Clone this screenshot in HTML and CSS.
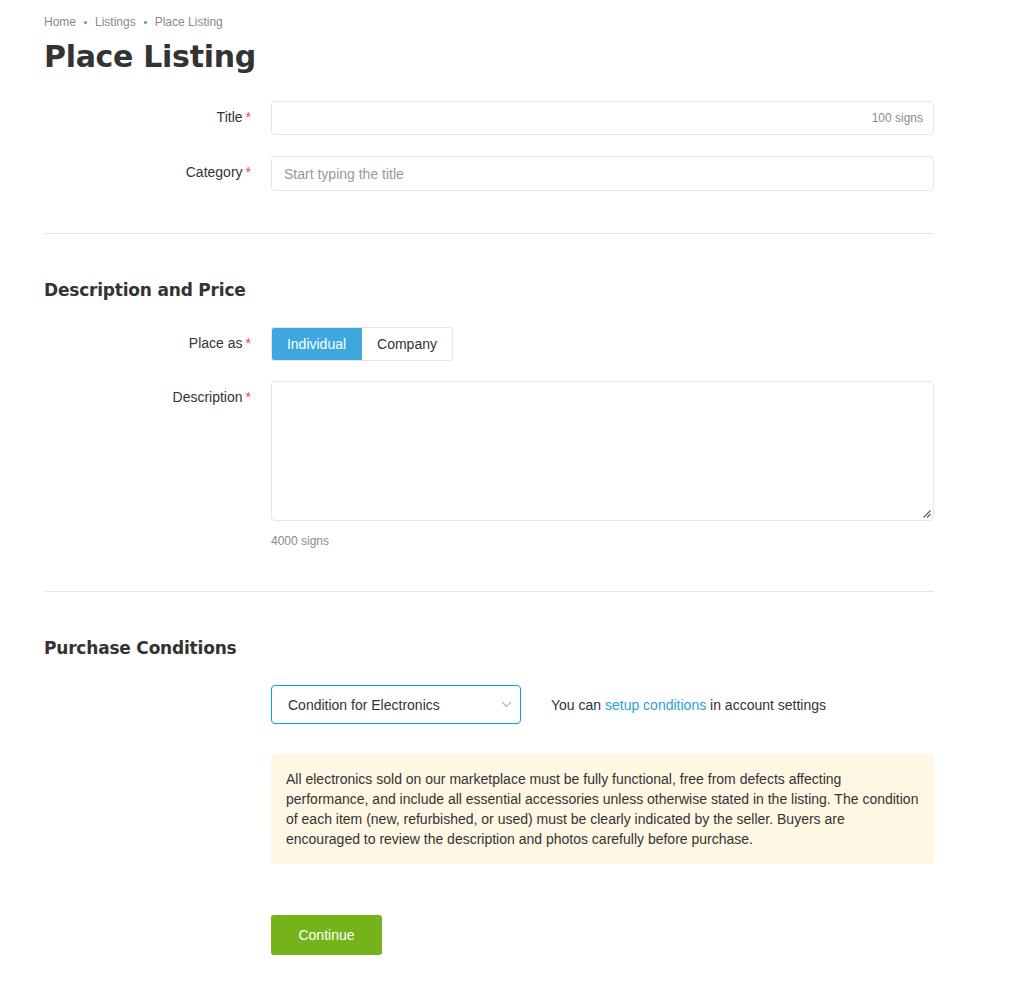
FILE: index.html
```html
<!DOCTYPE html>
<html>
<head>
<meta charset="utf-8">
<link rel="stylesheet" href="styles.css">
</head>
<body>
<div class="page">
  <nav class="crumbs">
    <a>Home</a><span class="dot"></span><a>Listings</a><span class="dot"></span><span>Place Listing</span>
  </nav>
  <h1 class="title">Place Listing</h1>

  <section class="block block-first">
    <div class="row">
      <label class="lbl">Title<span class="req">*</span></label>
      <div class="field">
        <div class="input input-title with-count"><span class="count">100 signs</span></div>
      </div>
    </div>
    <div class="row">
      <label class="lbl">Category<span class="req">*</span></label>
      <div class="field">
        <div class="input"><span class="ph">Start typing the title</span></div>
      </div>
    </div>
  </section>

  <section class="block block-mid">
    <h2 class="sub">Description and Price</h2>
    <div class="row">
      <label class="lbl">Place as<span class="req">*</span></label>
      <div class="field">
        <div class="toggle">
          <span class="opt opt-on">Individual</span><span class="opt">Company</span>
        </div>
      </div>
    </div>
    <div class="row">
      <label class="lbl">Description<span class="req">*</span></label>
      <div class="field">
        <div class="textarea">
          <svg class="grip" width="9" height="9" viewBox="0 0 9 9"><path d="M8.5 1.5 L1.5 8.5 M8.5 5 L5 8.5" stroke="#555" stroke-width="1.1" fill="none"/></svg>
        </div>
        <div class="hint">4000 signs</div>
      </div>
    </div>
  </section>

  <section class="block block-last">
    <h2 class="sub">Purchase Conditions</h2>
    <div class="row">
      <div class="lbl"></div>
      <div class="field">
        <div class="cond-line">
          <div class="select">
            <span>Condition for Electronics</span>
            <svg width="11" height="7" viewBox="0 0 11 7"><path d="M1 1 L5.5 5.5 L10 1" stroke="#b5b5b5" stroke-width="1.2" fill="none"/></svg>
          </div>
          <p class="cond-note">You can <a class="link">setup conditions</a> in account settings</p>
        </div>
        <div class="notice">All electronics sold on our marketplace must be fully functional, free from defects affecting performance, and include all essential accessories unless otherwise stated in the listing. The condition of each item (new, refurbished, or used) must be clearly indicated by the seller. Buyers are encouraged to review the description and photos carefully before purchase.</div>
        <button class="btn">Continue</button>
      </div>
    </div>
  </section>
</div>
</body>
</html>
```

FILE: styles.css
```css
* { box-sizing: border-box; }
html, body { margin: 0; padding: 0; background: #fff; }
body {
  font-family: "Liberation Sans", Arial, sans-serif;
  font-size: 14px;
  color: #333;
}
.page {
  width: 890px;
  margin-left: 44px;
  padding-top: 15px;
}
.crumbs {
  font-size: 12px;
  color: #8a8a8a;
  display: flex;
  align-items: center;
  height: 14px;
}
.crumbs .dot {
  width: 3px;
  height: 3px;
  border-radius: 50%;
  background: #3aa3dc;
  margin: 0 8px;
}
.title {
  font-family: "DejaVu Sans", sans-serif;
  font-weight: bold;
  font-size: 30px;
  letter-spacing: -0.3px;
  color: #333;
  margin: 8px 0 0;
  line-height: 40px;
}
.block {
  border-top: 1px solid #e6e6e6;
  padding: 0 0 44px;
}
.block-first {
  border-top: none;
  padding-top: 24px;
  padding-bottom: 42px;
}
.block-mid { padding-bottom: 43px; }
.block-last { padding-bottom: 40px; }
.sub {
  font-family: "DejaVu Sans", sans-serif;
  font-weight: bold;
  font-size: 17px;
  letter-spacing: -0.2px;
  color: #333;
  margin: 44px 0 25px;
  line-height: 24px;
}
.row {
  display: flex;
  gap: 20px;
  margin-bottom: 21px;
}
.block-mid .row { margin-bottom: 20px; }
.block .row:last-child { margin-bottom: 0; }
.lbl {
  width: 207px;
  flex: none;
  text-align: right;
  padding-top: 8px;
  line-height: 16px;
  color: #333;
}
.req { color: #e8484a; margin-left: 3px; }
.field { flex: 1; min-width: 0; }
.input {
  height: 35px;
  border: 1px solid #e3e7e9;
  border-radius: 4px;
  display: flex;
  align-items: center;
  padding: 0 12px;
}
.input-title { height: 34px; }
.with-count { justify-content: flex-end; padding-right: 10px; }
.count { font-size: 12px; color: #8a8a8a; }
.ph { color: #999; }
.toggle {
  display: inline-flex;
  height: 34px;
  border: 1px solid #e3e7e9;
  border-radius: 3px;
  overflow: hidden;
}
.opt {
  width: 90px;
  display: flex;
  align-items: center;
  justify-content: center;
  color: #333;
}
.opt-on {
  background: #3ea8de;
  color: #fff;
  width: 91px;
  margin: -1px 0 -1px -1px;
}
.textarea {
  height: 140px;
  border: 1px solid #e3e7e9;
  border-radius: 4px;
  position: relative;
}
.grip { position: absolute; right: 2px; bottom: 2px; }
.hint {
  font-size: 12px;
  color: #8a8a8a;
  margin-top: 13px;
}
.cond-line {
  display: flex;
  align-items: center;
  gap: 30px;
  margin-top: 0;
}
.select {
  width: 250px;
  height: 39px;
  border: 1px solid #1d9bd7;
  border-radius: 4px;
  display: flex;
  align-items: center;
  justify-content: space-between;
  padding: 0 8px 0 16px;
  color: #333;
  box-shadow: 0 0 0 1px rgba(29,155,215,0.08);
}
.cond-note { margin: 0; color: #333; }
.link { color: #2a9fd8; text-decoration: none; }
.notice {
  margin-top: 30px;
  background: #fef7e3;
  border-radius: 4px;
  padding: 15px 14px 15px 15px;
  line-height: 20px;
  color: #333;
}
.btn {
  margin-top: 51px;
  width: 111px;
  height: 40px;
  border: none;
  border-radius: 3px;
  background: #76b31b;
  color: #fff;
  font-family: "Liberation Sans", Arial, sans-serif;
  font-size: 14px;
  cursor: pointer;
}
```
